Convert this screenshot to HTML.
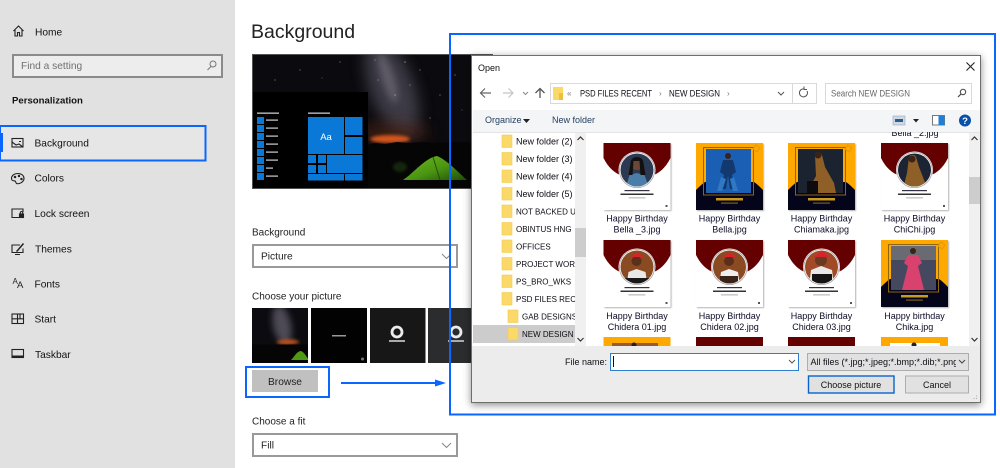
<!DOCTYPE html>
<html><head><meta charset="utf-8"><title>Background</title>
<style>
html,body{margin:0;padding:0;background:#fff;width:1000px;height:468px;overflow:hidden}
svg{display:block;font-family:"Liberation Sans",sans-serif;filter:blur(.3px)}
.n{font-size:10.2px;fill:#111}
.l{font-size:10px;fill:#222}
.d{font-size:9px;fill:#0c0c14}
.u{font-size:8px;fill:#0c0c14}
.c{font-size:9px;fill:#0c0c26;text-anchor:middle}
.ic{fill:none;stroke:#222;stroke-width:1.1}
</style></head><body>
<svg width="1000" height="468" viewBox="0 0 1000 468" xmlns="http://www.w3.org/2000/svg">
<defs>
<filter id="b0" x="-100%" y="-100%" width="300%" height="300%"><feGaussianBlur stdDeviation="1.5"/></filter>
<filter id="b1" x="-100%" y="-100%" width="300%" height="300%"><feGaussianBlur stdDeviation="7"/></filter>
<filter id="b2" x="-100%" y="-100%" width="300%" height="300%"><feGaussianBlur stdDeviation="3.5"/></filter>
<filter id="sh" x="-5%" y="-5%" width="110%" height="110%"><feDropShadow dx="0" dy="2" stdDeviation="4" flood-color="#000" flood-opacity=".45"/></filter>
<filter id="ts" x="-10%" y="-10%" width="120%" height="120%"><feDropShadow dx="1" dy="1" stdDeviation=".8" flood-color="#000" flood-opacity=".3"/></filter>
<linearGradient id="tent" x1="0" y1="0" x2="1" y2="1"><stop offset="0" stop-color="#6dbb1c"/><stop offset=".55" stop-color="#4a9412"/><stop offset="1" stop-color="#1f4a0a"/></linearGradient>
<clipPath id="pv"><rect x="252" y="54" width="241" height="135"/></clipPath>
<clipPath id="tree"><rect x="473" y="133" width="102" height="213"/></clipPath>
<clipPath id="cont"><rect x="587" y="132" width="382" height="214"/></clipPath>
<clipPath id="flt"><rect x="810" y="354" width="146" height="16"/></clipPath>
<clipPath id="t4"><rect x="428" y="308" width="43" height="55"/></clipPath>
<clipPath id="t1"><rect x="252" y="308" width="56" height="55"/></clipPath>
<clipPath id="circ"><circle cx="33.500" cy="27" r="16.500"/></clipPath>
<clipPath id="ph"><rect x="10" y="6" width="45" height="44"/></clipPath>
<g id="red"><g filter="url(#ts)"><rect width="67" height="67" fill="#fff"/></g>
<path d="M0 0H67V15C62 25 56 30 48 33H19C11 30 5 25 0 15Z" fill="#650000"/>
<circle cx="33.500" cy="27" r="18.500" fill="#fff"/><circle cx="33.500" cy="27" r="17.600" fill="none" stroke="#a9a3a8" stroke-width=".8"/></g>
<g id="txt"><rect x="21" y="47" width="25" height="1.200" fill="#334"/><rect x="17" y="50.500" width="33" height="1.500" fill="#333"/><rect x="25" y="54.500" width="17" height=".8" fill="#999"/><rect x="62" y="62" width="2" height="2" fill="#555"/></g>
<g id="org"><g filter="url(#ts)"><rect width="67" height="67" fill="#ffa800"/></g>
<path d="M0 47C3 44 6 41 9 39H58C61 41 64 44 67 47V67H0Z" fill="#04041a"/>
<rect x="7.500" y="4.500" width="50" height="47.500" fill="none" stroke="#8f6510" stroke-width="1"/>
<rect x="20" y="55" width="27" height="2.500" fill="#c99a20"/><rect x="25" y="59.500" width="17" height="1.200" fill="#7a6020"/>
<path d="M60 2l4 3-3 4-4-3z" fill="none" stroke="#e09a10" stroke-width="1"/></g>
</defs>

<!-- sidebar -->
<rect x="0" y="0" width="235" height="468" fill="#e1e1e1"/>
<path class="ic" d="M13.500 31l5-5 5 5M15 30v6h2.500v-3.500h2V36H22v-6"/>
<text x="35" y="35.500" class="n">Home</text>
<rect x="13" y="55" width="209" height="22" fill="#ededed" stroke="#8b8b8b" stroke-width="2"/>
<text x="21" y="69" class="n" style="fill:#6f6f6f">Find a setting</text>
<circle cx="213" cy="64" r="3" fill="none" stroke="#777"/><path d="M211 66.500l-3.500 3.500" stroke="#777" fill="none"/>
<text x="12" y="103.500" font-size="9.600" font-weight="bold" fill="#111">Personalization</text>

<rect x="0" y="126" width="205.500" height="34.500" fill="#e6e6e6" stroke="#0a66ff" stroke-width="2"/>
<rect x="0" y="133" width="3" height="19" fill="#0a66ff"/>
<g class="ic"><rect x="12" y="138.500" width="11" height="8.500"/><path d="M12 142l4 3 3-1 4 3M19 141.500h2"/></g>
<text x="34.500" y="146.500" class="n">Background</text>

<g class="ic"><path d="M18 173.500c-4 0-6.500 2.300-6.500 5 0 2.800 2.500 2 3.500 2.500s.5 1.500 1.500 2.500c2 .8 7.500-1 7.500-5 0-3-2.500-5-6-5z"/><circle cx="15" cy="177" r=".7"/><circle cx="19" cy="176" r=".7"/><circle cx="21.500" cy="179" r=".7"/></g>
<text x="34.500" y="181.500" class="n">Colors</text>

<g class="ic"><path d="M20 217.500h-8v-8.500h11v3"/><rect x="19.500" y="214" width="4" height="3.500" fill="#222"/><path d="M20.300 214v-1.300a1.200 1.200 0 0 1 2.400 0v1.300"/></g>
<text x="34.500" y="217" class="n">Lock screen</text>

<g class="ic"><path d="M20 245h-8v7.500h11v-4M15 254.500h5"/><path d="M23.500 243.500l-5.500 6.500-1.500 1.500" stroke-width="1.500"/></g>
<text x="35" y="252.500" class="n">Themes</text>

<g fill="#222" font-size="8"><text x="12.500" y="284">A</text><text x="17" y="288" font-size="9.500">A</text></g>
<text x="34.500" y="287.500" class="n">Fonts</text>

<g class="ic"><rect x="12" y="314" width="11.500" height="9.500"/><path d="M12 318.800h11.500M17.500 314v9.500M20 314v4.800"/></g>
<text x="34.500" y="322.500" class="n">Start</text>

<g class="ic"><rect x="12" y="349.500" width="11.500" height="8"/></g><rect x="12" y="355.500" width="11.500" height="2.300" fill="#222"/>
<text x="35" y="358" class="n">Taskbar</text>

<!-- main -->
<text x="251" y="38" font-size="19.500" fill="#222">Background</text>
<g clip-path="url(#pv)">
<rect x="252" y="54" width="241" height="135" fill="#0b0b0f"/>
<ellipse cx="392" cy="88" rx="22" ry="52" transform="rotate(-20 392 88)" fill="#4a4652" opacity=".8" filter="url(#b1)"/>
<ellipse cx="388" cy="78" rx="6" ry="26" transform="rotate(-18 388 78)" fill="#7c7684" opacity=".55" filter="url(#b2)"/>
<ellipse cx="392" cy="132" rx="38" ry="8" fill="#4a2212" opacity=".8" filter="url(#b1)"/>
<ellipse cx="390" cy="139" rx="20" ry="4" fill="#d2541a" filter="url(#b0)"/>
<path d="M367 145l8-2 10 1 12-2 12 1 14-1 12 1 18-1 40 1v46H367z" fill="#050505"/>
<g fill="#b8b8c4"><circle cx="378" cy="80" r=".5"/><circle cx="420" cy="70" r=".5"/><circle cx="440" cy="95" r=".5"/><circle cx="455" cy="75" r=".5"/><circle cx="300" cy="70" r=".5"/><circle cx="340" cy="62" r=".5"/><circle cx="275" cy="80" r=".5"/><circle cx="405" cy="62" r=".6"/><circle cx="395" cy="95" r=".6"/><circle cx="410" cy="85" r=".5"/><circle cx="375" cy="60" r=".5"/><circle cx="430" cy="118" r=".5"/><circle cx="322" cy="78" r=".4"/><circle cx="462" cy="110" r=".4"/></g>
<ellipse cx="400" cy="167" rx="7" ry="5" fill="#12280c" filter="url(#b0)"/>
<path d="M403 180C415 172 425 158 437 156C447 160 458 172 467 180Z" fill="url(#tent)"/>
<path d="M433 157l7 23" stroke="#234a0c" stroke-width=".9" fill="none"/>
<rect x="253" y="92" width="115" height="97" fill="#000"/>
<rect x="257" y="112.500" width="22" height="1.300" fill="#c8c8c8"/><rect x="308" y="112.500" width="22" height="1.300" fill="#c8c8c8"/>
<g fill="#0a78d7">
<rect x="257" y="117" width="7" height="7"/><rect x="257" y="125" width="7" height="7"/><rect x="257" y="133" width="7" height="7"/><rect x="257" y="141" width="7" height="7"/><rect x="257" y="149" width="7" height="7"/><rect x="257" y="157" width="7" height="7"/><rect x="257" y="165" width="7" height="7"/><rect x="257" y="173" width="7" height="7"/>
<rect x="308" y="117" width="36" height="37"/><rect x="345" y="117" width="17.500" height="18"/><rect x="345" y="137" width="17.500" height="17"/>
<rect x="308" y="155" width="8" height="8"/><rect x="318" y="155" width="8" height="8"/><rect x="308" y="165" width="8" height="8"/><rect x="318" y="165" width="8" height="8"/>
<rect x="327" y="155" width="35.500" height="18"/><rect x="308" y="174" width="36" height="6.500"/><rect x="345" y="174" width="17.500" height="6.500"/>
</g>
<g fill="#d0d0d0"><rect x="266" y="119.500" width="12" height="1.200"/><rect x="266" y="127.500" width="12" height="1.200"/><rect x="266" y="135.500" width="12" height="1.200"/><rect x="266" y="143.500" width="12" height="1.200"/><rect x="266" y="151.500" width="12" height="1.200"/><rect x="266" y="159.500" width="12" height="1.200"/><rect x="266" y="167.500" width="7" height="1.200"/><rect x="266" y="175.500" width="12" height="1.200"/></g>
<text x="326" y="140" font-size="9.500" fill="#fff" text-anchor="middle">Aa</text>
</g>
<rect x="252.500" y="54.500" width="240" height="134" fill="none" stroke="#666" stroke-width=".8"/>

<text x="252" y="235.500" class="l">Background</text>
<rect x="253" y="245" width="204" height="22" fill="#fff" stroke="#999" stroke-width="2"/>
<text x="261" y="259.500" class="n" style="fill:#222">Picture</text>
<path d="M442 254l4.500 4.500 4.500-4.500" fill="none" stroke="#888"/>
<text x="252" y="299.500" class="l">Choose your picture</text>

<!-- thumbs -->
<rect x="252" y="308" width="56" height="55" fill="#0b0b10"/>
<g clip-path="url(#t1)">
<ellipse cx="282" cy="325" rx="9" ry="20" transform="rotate(-12 282 325)" fill="#5a5562" opacity=".85" filter="url(#b2)"/>
<ellipse cx="288" cy="342" rx="11" ry="2.500" fill="#c4521a" filter="url(#b0)"/>
<rect x="252" y="344.500" width="56" height="18.500" fill="#050505"/>
<path d="M291 360C295 356 297 351 301 351C304 352 306 356 309 360Z" fill="#4f9a14"/>
</g>
<rect x="311" y="308" width="56" height="55" fill="#020202"/>
<rect x="332" y="335" width="14" height="1.500" fill="#999"/><circle cx="362.500" cy="359" r="1.500" fill="#777"/>
<rect x="370" y="308" width="55.500" height="55" fill="#171717"/>
<circle cx="397" cy="332" r="5" fill="none" stroke="#ececec" stroke-width="2.800"/><rect x="389" y="340" width="16" height="2" fill="#aaa"/>
<g clip-path="url(#t4)"><rect x="428" y="308" width="43" height="55" fill="#2a2c2e"/>
<circle cx="456" cy="332" r="5" fill="none" stroke="#ececec" stroke-width="2.800"/><rect x="448" y="340" width="16" height="2" fill="#aaa"/></g>

<rect x="246" y="367" width="83" height="30" fill="#fff" stroke="#0a66ff" stroke-width="2"/>
<rect x="252" y="370" width="66" height="22" fill="#c0c0c0"/>
<text x="285" y="385" class="n" text-anchor="middle" style="fill:#222">Browse</text>
<rect x="341" y="382" width="95" height="2" fill="#0a66ff"/>
<path d="M435 379.500l11 3.500-11 3.500z" fill="#0a66ff"/>
<text x="252" y="424.500" class="l">Choose a fit</text>
<rect x="253" y="434" width="204" height="22" fill="#fff" stroke="#999" stroke-width="2"/>
<text x="261" y="448.500" class="n" style="fill:#222">Fill</text>
<path d="M442 443l4.500 4.500 4.500-4.500" fill="none" stroke="#888"/>

<!-- blue frame -->
<rect x="450" y="34" width="545" height="380.500" fill="none" stroke="#0a66ff" stroke-width="2"/>

<!-- dialog -->
<g filter="url(#sh)"><rect x="471.500" y="55.500" width="509" height="347" fill="#fff" stroke="#6e6e6e"/></g>
<text x="478" y="71" font-size="9" fill="#111">Open</text>
<path d="M966.500 62.500l8 8M974.500 62.500l-8 8" stroke="#222" stroke-width="1.100" fill="none"/>

<path d="M481 93h10M485 88.500l-4.500 4.500 4.500 4.500" fill="none" stroke="#666" stroke-width="1.200"/>
<path d="M503 93h10M508.500 88.500l4.500 4.500-4.500 4.500" fill="none" stroke="#c4c4c4" stroke-width="1.200"/>
<path d="M523 92l2.500 2.500 2.500-2.500" fill="none" stroke="#888"/>
<path d="M540 98V88.500M535.500 93l4.500-4.500 4.500 4.500" fill="none" stroke="#555" stroke-width="1.300"/>

<rect x="550.500" y="83.500" width="266" height="20" fill="#fff" stroke="#d9d9d9"/>
<rect x="553" y="87" width="10" height="13" fill="#fbd968"/><rect x="559" y="93" width="4" height="7" fill="#edbf3e"/>
<text x="567" y="96" font-size="8" fill="#777">&#171;</text>
<text x="580" y="96.500" class="d" textLength="72" lengthAdjust="spacingAndGlyphs">PSD FILES RECENT</text>
<text x="659" y="96" font-size="8" fill="#777">&#8250;</text>
<text x="669" y="96.500" class="d" textLength="51" lengthAdjust="spacingAndGlyphs">NEW DESIGN</text>
<text x="727" y="96" font-size="8" fill="#777">&#8250;</text>
<path d="M778 92l3 3 3-3" fill="none" stroke="#555"/>
<path d="M792.500 84v19" stroke="#d9d9d9"/>
<path d="M807 91a4 4 0 1 1-2.500-2M804 86.500v3h3" fill="none" stroke="#555"/>
<rect x="825.500" y="83.500" width="146" height="20" fill="#fff" stroke="#d9d9d9"/>
<text x="831" y="96.500" font-size="8.800" fill="#666" textLength="79" lengthAdjust="spacingAndGlyphs">Search NEW DESIGN</text>
<circle cx="963" cy="92" r="2.700" fill="none" stroke="#444"/><path d="M961 94l-3 3" stroke="#444" stroke-width="1.200"/>

<rect x="473" y="110" width="507" height="22" fill="#f4f5f7"/>
<path d="M473 132.500h507" stroke="#e4e4e4"/>
<text x="485" y="123" class="d" style="fill:#27405e">Organize</text>
<path d="M523 119h7l-3.500 4z" fill="#222"/>
<text x="552" y="123" class="d" style="fill:#27405e">New folder</text>
<rect x="893" y="116" width="12" height="9" fill="#cfd9e6" stroke="#9aa8b8" stroke-width=".6"/><rect x="895" y="119" width="8" height="3" fill="#2a5c8e"/>
<path d="M913 119h6l-3 3.500z" fill="#222"/>
<rect x="932.500" y="115.500" width="12" height="9.500" fill="#fff" stroke="#777"/><rect x="938.500" y="116" width="6" height="9" fill="#1f7fd6"/>
<circle cx="965" cy="120.500" r="6" fill="#0a50a8"/><text x="965" y="124" font-size="9.500" font-weight="bold" fill="#fff" text-anchor="middle">?</text>

<!-- tree -->
<g clip-path="url(#tree)">
<rect x="473" y="325" width="102" height="18" fill="#cccccc"/>
<g fill="#fbd968" stroke="#f0cb55" stroke-width=".6">
<rect x="502" y="135" width="10" height="12.500"/><rect x="502" y="152.500" width="10" height="12.500"/><rect x="502" y="170" width="10" height="12.500"/><rect x="502" y="187.500" width="10" height="12.500"/><rect x="502" y="205" width="10" height="12.500"/><rect x="502" y="222.500" width="10" height="12.500"/><rect x="502" y="240" width="10" height="12.500"/><rect x="502" y="257.500" width="10" height="12.500"/><rect x="502" y="275" width="10" height="12.500"/><rect x="502" y="292.500" width="10" height="12.500"/><rect x="508" y="310" width="10" height="12.500"/><rect x="508" y="327.500" width="10" height="12.500"/>
</g>
<text x="516" y="144.500" class="d">New folder (2)</text>
<text x="516" y="162" class="d">New folder (3)</text>
<text x="516" y="179.500" class="d">New folder (4)</text>
<text x="516" y="197" class="d">New folder (5)</text>
<text x="516" y="214.500" class="u">NOT BACKED UP</text>
<text x="516" y="232" class="u">OBINTUS HNG</text>
<text x="516" y="249.500" class="u">OFFICES</text>
<text x="516" y="267" class="u">PROJECT WORKS</text>
<text x="516" y="284.500" class="u">PS_BRO_WKS</text>
<text x="516" y="302" class="u">PSD FILES RECENT</text>
<text x="522" y="319.500" class="u">GAB DESIGNS</text>
<text x="522" y="337" class="u">NEW DESIGN</text>
</g>
<rect x="575" y="133" width="11" height="213" fill="#f0f0f0"/>
<rect x="575" y="228" width="11" height="29" fill="#cdcdcd"/>
<path d="M577.500 140l3-3 3 3M577.500 338l3 3 3-3" fill="none" stroke="#333" stroke-width="1.200"/>

<!-- content -->
<g clip-path="url(#cont)">
<text x="915" y="136" class="c">Bella _2.jpg</text>

<g transform="translate(603.500 143)"><use href="#red"/><g clip-path="url(#circ)"><rect width="67" height="50" fill="#2b3a52"/><path d="M22 46l4-14 7-2 8 2 5 14z" fill="#4a7ea8"/><circle cx="33.500" cy="21" r="6" fill="#6d4634"/><path d="M27 20c0-8 13-8 13 0l2 12h-5l-1-14h-6l-1 14h-4z" fill="#111"/></g><use href="#txt"/></g>

<g transform="translate(696 143)"><use href="#org"/><rect x="10" y="6" width="45" height="44" fill="#1a5fb4"/><g clip-path="url(#ph)"><circle cx="32" cy="13" r="3" fill="#3a2218"/><path d="M27 17h10l3 12-4 3 3 14h-5l-2-14-2 14h-5l3-14-4-3z" fill="#12386e"/><path d="M25 34l-4 14h5l4-12zM38 34l4 14h-5l-3-12z" fill="#2f78c4"/></g></g>

<g transform="translate(788 143)"><use href="#org"/><rect x="10" y="6" width="45" height="44" fill="#1c2330"/><g clip-path="url(#ph)"><path d="M27 12a4 4 0 0 1 7 0l3 12 9 16 2 10H24l-1-8 5-9z" fill="#8f5f28"/><circle cx="30" cy="12" r="3.500" fill="#3b2314"/><rect x="19" y="38" width="11" height="12" fill="#0c0c10"/></g></g>

<g transform="translate(881 143)"><use href="#red"/><g clip-path="url(#circ)"><rect width="67" height="50" fill="#1c2433"/><path d="M28 14a4 4 0 0 1 7 0l3 10 7 18-2 4H22l4-16z" fill="#8f5f28"/><circle cx="31" cy="16" r="3.500" fill="#3b2314"/></g><use href="#txt"/></g>

<g transform="translate(603.500 240)"><use href="#red"/><g clip-path="url(#circ)"><rect width="67" height="50" fill="#8a4a22"/><path d="M23 46l2-14 8-3 9 3 2 14z" fill="#e8e8e8"/><path d="M20 46h28v-8H20z" fill="#181818"/><circle cx="33" cy="21" r="5" fill="#5c2f1a"/><path d="M27 17l7-5 6 5z" fill="#d8232a"/></g><use href="#txt"/></g>
<g transform="translate(696 240)"><use href="#red"/><g clip-path="url(#circ)"><rect width="67" height="50" fill="#8a4a22"/><path d="M23 46l2-14 8-3 9 3 2 14z" fill="#eee"/><path d="M24 36h18v10H24z" fill="#3a2218"/><circle cx="33" cy="21" r="5" fill="#5c2f1a"/><path d="M27 17l7-5 6 5z" fill="#d8232a"/></g><use href="#txt"/></g>
<g transform="translate(788 240)"><use href="#red"/><g clip-path="url(#circ)"><rect width="67" height="50" fill="#a04a28"/><path d="M21 46l2-16 10-4 11 4 2 16z" fill="#e8e8e8"/><rect x="24" y="34" width="20" height="12" fill="#141414"/><circle cx="33" cy="20" r="6" fill="#6a3a20"/><path d="M26 17l8-7 7 7z" fill="#d8232a"/></g><use href="#txt"/></g>

<g transform="translate(881 240)"><use href="#org"/><rect x="10" y="6" width="45" height="44" fill="#454960"/><rect x="10" y="6" width="45" height="14" fill="#6a6a72"/><g clip-path="url(#ph)"><circle cx="32" cy="11" r="3" fill="#3b2314"/><path d="M27 15h10l4 8-4 3 6 24H21l6-24-4-3z" fill="#d9426f"/></g></g>

<text x="637" y="221.500" class="c">Happy Birthday</text><text x="637" y="232.500" class="c">Bella _3.jpg</text>
<text x="729.500" y="221.500" class="c">Happy Birthday</text><text x="729.500" y="232.500" class="c">Bella.jpg</text>
<text x="821.500" y="221.500" class="c">Happy Birthday</text><text x="821.500" y="232.500" class="c">Chiamaka.jpg</text>
<text x="914.500" y="221.500" class="c">Happy Birthday</text><text x="914.500" y="232.500" class="c">ChiChi.jpg</text>
<text x="637" y="319" class="c">Happy Birthday</text><text x="637" y="330" class="c">Chidera 01.jpg</text>
<text x="729.500" y="319" class="c">Happy Birthday</text><text x="729.500" y="330" class="c">Chidera 02.jpg</text>
<text x="821.500" y="319" class="c">Happy Birthday</text><text x="821.500" y="330" class="c">Chidera 03.jpg</text>
<text x="914.500" y="319" class="c">Happy birthday</text><text x="914.500" y="330" class="c">Chika.jpg</text>

<rect x="603.500" y="337" width="67" height="10" fill="#ffa800"/><rect x="612" y="343" width="46" height="4" fill="#9a5a30"/><circle cx="634" cy="345" r="2.500" fill="#222"/>
<rect x="696" y="337" width="67" height="10" fill="#650000"/>
<rect x="788" y="337" width="67" height="10" fill="#650000"/>
<rect x="881" y="337" width="67" height="10" fill="#ffa800"/><rect x="890" y="343" width="50" height="4" fill="#fff"/><circle cx="914" cy="345" r="2.500" fill="#222"/>
</g>
<rect x="969" y="133" width="11" height="213" fill="#f0f0f0"/>
<rect x="969" y="177" width="11" height="27" fill="#cdcdcd"/>
<path d="M971.500 140l3-3 3 3M971.500 338l3 3 3-3" fill="none" stroke="#333" stroke-width="1.200"/>

<!-- footer -->
<rect x="472" y="346" width="508" height="56" fill="#ececec"/>
<text x="607" y="365" class="d" text-anchor="end">File name:</text>
<rect x="610.500" y="353.500" width="188" height="17" fill="#fff" stroke="#2f7fd1"/>
<rect x="613" y="356" width="1" height="11" fill="#111"/>
<path d="M789 360l3 3 3-3" fill="none" stroke="#555"/>
<rect x="807.500" y="353.500" width="161" height="17" fill="#e1e1e1" stroke="#adadad"/>
<g clip-path="url(#flt)"><text x="810.500" y="365" class="d">All files (*.jpg;*.jpeg;*.bmp;*.dib;*.png;*.gif)</text></g>
<path d="M959 360l3 3 3-3" fill="none" stroke="#444"/>
<rect x="808.500" y="376" width="85.500" height="17" fill="#e1e1e1" stroke="#0a64c8" stroke-width="1.400"/>
<text x="851" y="388" class="c" style="fill:#111">Choose picture</text>
<rect x="905.500" y="376" width="63" height="17" fill="#e1e1e1" stroke="#adadad"/>
<text x="937" y="388" class="c" style="fill:#111">Cancel</text>
<g fill="#aaa"><rect x="976" y="398" width="1" height="1"/><rect x="973.500" y="398" width="1" height="1"/><rect x="976" y="395.500" width="1" height="1"/></g>
</svg>
</body></html>
